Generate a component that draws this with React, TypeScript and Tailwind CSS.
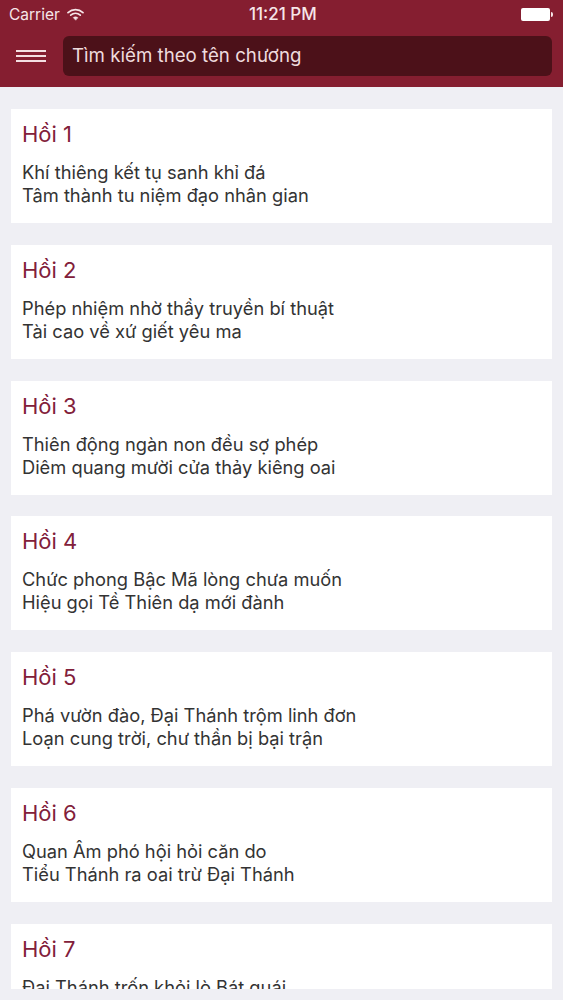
const items = [
  ["Hồi 1", "Khí thiêng kết tụ sanh khỉ đá", "Tâm thành tu niệm đạo nhân gian"],
  ["Hồi 2", "Phép nhiệm nhờ thầy truyền bí thuật", "Tài cao về xứ giết yêu ma"],
  ["Hồi 3", "Thiên động ngàn non đều sợ phép", "Diêm quang mười cửa thảy kiêng oai"],
  ["Hồi 4", "Chức phong Bậc Mã lòng chưa muốn", "Hiệu gọi Tề Thiên dạ mới đành"],
  ["Hồi 5", "Phá vườn đào, Đại Thánh trộm linh đơn", "Loạn cung trời, chư thần bị bại trận"],
  ["Hồi 6", "Quan Âm phó hội hỏi căn do", "Tiểu Thánh ra oai trừ Đại Thánh"],
  ["Hồi 7", "Đại Thánh trốn khỏi lò Bát quái", ""],
];

export default function App() {
  return (
    <div className="w-[563px] h-[1000px] bg-[#efeff4] overflow-hidden font-['Inter','Liberation_Sans',sans-serif]">
      <header className="h-[87px] bg-[#851e30] flex flex-col">
        <div className="h-[29px] flex items-center justify-between pl-[9px] pr-[10px] relative text-[#f6e6e8]">
          <div className="flex items-center gap-[7px]">
            <span className="text-[15.5px] leading-none">Carrier</span>
            <svg width="17" height="13" viewBox="0 0 17 13" fill="none" stroke="currentColor" strokeLinecap="round">
              <path d="M1 4.6C5.4 0.6 11.6 0.6 16 4.6" strokeWidth="1.7" />
              <path d="M3.7 7.2C6.5 4.8 10.5 4.8 13.3 7.2" strokeWidth="1.7" />
              <path d="M8.5 12L6.2 9.6C7.5 8.6 9.5 8.6 10.8 9.6Z" fill="currentColor" strokeWidth="0.5" />
            </svg>
          </div>
          <span className="absolute left-[249px] text-[17px] leading-none font-medium">11:21 PM</span>
          <div className="flex items-center gap-[1px]">
            <div className="w-[29px] h-[13px] bg-white rounded-[2px]" />
            <div className="w-[2px] h-[5px] bg-[#f6e6e8] rounded-r-sm" />
          </div>
        </div>
        <div className="flex items-center pl-[16px] pr-[11px] gap-[17px] mt-[7px]">
          <div className="w-[30px] flex flex-col gap-[3px]">
            <div className="h-[2px] bg-[#f4dfe2]" />
            <div className="h-[2px] bg-[#f4dfe2]" />
            <div className="h-[2px] bg-[#f4dfe2]" />
          </div>
          <div className="flex-1 h-[40px] rounded-[6px] bg-[#4c1119] flex items-center pl-[9px] text-[18.7px] text-[#efdcde]">
            Tìm kiếm theo tên chương
          </div>
        </div>
      </header>
      <main className="h-[902px] overflow-hidden px-[11px] pt-[22px] flex flex-col gap-[21.83px]">
        {items.map(([title, a, b]) => (
          <section key={title} className="bg-white h-[114px] shrink-0 px-[11px] pt-[11px]">
            <h2 className="text-[#82203a] text-[22px] leading-[28px]">{title}</h2>
            <p className="mt-[13px] text-[#333333] text-[18.3px] leading-[23px]">
              {a}
              {b && <br />}
              {b}
            </p>
          </section>
        ))}
      </main>
    </div>
  );
}
